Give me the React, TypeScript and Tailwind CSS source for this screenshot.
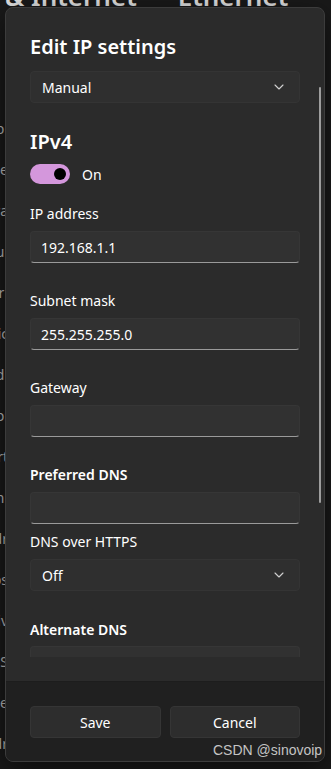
import React from "react";

const font = "font-['Segoe_UI','Noto_Sans',sans-serif]";

function Chevron() {
  return (
    <svg width="10" height="6" viewBox="0 0 10 6" fill="none">
      <path d="M1 1 L5 5 L9 1" stroke="#d0d0d0" strokeWidth="1.1" strokeLinecap="round" strokeLinejoin="round" />
    </svg>
  );
}

function Select({ value }: { value: string }) {
  return (
    <div className="h-[32px] w-full rounded-[4px] bg-[#2f2f2f] border border-[#343434] flex items-center justify-between pl-[11px] pr-[15px]">
      <span className="text-[14px] text-white">{value}</span>
      <Chevron />
    </div>
  );
}

function Input({ value }: { value?: string }) {
  return (
    <div className="h-[32px] w-full rounded-[4px] bg-[#313131] border border-[#363636] border-b-[#9a9a9a] flex items-center pl-[10px]">
      <span className="text-[14px] text-white">{value}</span>
    </div>
  );
}

export default function App() {
  return (
    <div className={`relative w-[331px] h-[769px] overflow-hidden bg-[#1a1a1a] ${font}`}>
      {/* background page */}
      <div className="flex gap-[41px] pl-[5px] -mt-[17px] text-[26px] font-semibold text-[#e6e6e6] leading-[26px] whitespace-nowrap">
        <span>&amp; Internet</span>
        <span>Ethernet</span>
      </div>
      <div className="flex flex-col -ml-[40px] mt-[109px] gap-[20px] text-[14px] text-[#bdbdbd] w-[48px] items-end">
        <span>abl</span>
        <span>ide</span>
        <span>iva</span>
        <span>ul</span>
        <span>ori</span>
        <span>ic</span>
        <span>dl</span>
        <span>tp:</span>
        <span>rt</span>
        <span>ml</span>
        <span>dr</span>
        <span>ps</span>
        <span>iv</span>
        <span>6S</span>
        <span>ie</span>
        <span>dr</span>
        <span>la</span>
        <span>SS</span>
        <span>dr</span>
        <span>SS</span>
        <span>DD</span>
      </div>

      {/* dialog */}
      <div className="absolute left-[5px] top-[7px] w-[320px] h-[755px] rounded-[8px] border border-[#3c3c3c] bg-[#2b2b2b] flex flex-col overflow-hidden text-white shadow-[0_8px_32px_rgba(0,0,0,0.6)]">
        <div className="h-[649px] overflow-hidden px-[24px] pt-[25px] flex flex-col">
          <div className="text-[20px] leading-[28px] font-semibold">Edit IP settings</div>
          <div className="mt-[10px]"><Select value="Manual" /></div>
          <div className="mt-[25px] text-[20px] leading-[28px] font-semibold">IPv4</div>
          <div className="mt-[8px] flex items-center h-[20px]">
            <div className="w-[40px] h-[20px] rounded-full bg-[#d497dc] flex items-center justify-end pr-[4px]">
              <div className="w-[12px] h-[12px] rounded-full bg-black" />
            </div>
            <span className="ml-[12px] text-[14px]">On</span>
          </div>
          <div className="mt-[20px] text-[14px] leading-[20px]">IP address</div>
          <div className="mt-[7px]"><Input value="192.168.1.1" /></div>
          <div className="mt-[28px] text-[14px] leading-[20px]">Subnet mask</div>
          <div className="mt-[7px]"><Input value="255.255.255.0" /></div>
          <div className="mt-[28px] text-[14px] leading-[20px]">Gateway</div>
          <div className="mt-[7px]"><Input /></div>
          <div className="mt-[28px] text-[14px] leading-[20px] font-semibold">Preferred DNS</div>
          <div className="mt-[7px]"><Input /></div>
          <div className="mt-[8px] text-[14px] leading-[20px]">DNS over HTTPS</div>
          <div className="mt-[7px]"><Select value="Off" /></div>
          <div className="mt-[29px] text-[14px] leading-[20px] font-semibold">Alternate DNS</div>
          <div className="mt-[6px]"><Input /></div>
        </div>
        <div className="h-[24px]" />
        <div className="flex-1 bg-[#202020] border-t border-[#1d1d1d] px-[24px] pt-[24px]">
          <div className="grid grid-cols-2 gap-[9px]">
            <div className="h-[32px] rounded-[4px] bg-[#2d2d2d] border border-[#353535] flex items-center justify-center text-[14px]">Save</div>
            <div className="h-[32px] rounded-[4px] bg-[#2d2d2d] border border-[#353535] flex items-center justify-center text-[14px]">Cancel</div>
          </div>
        </div>
        {/* scrollbar */}
        <div className="absolute left-[313px] top-[79px] w-[2px] h-[416px] rounded-full bg-[#9d9d9d]" />
      </div>

      {/* watermark */}
      <div className="absolute left-[213px] top-[741px] text-[14px] leading-[18px] text-[#c4c4c4] font-['Liberation_Sans',Arial,sans-serif]">
        CSDN @sinovoip
      </div>
    </div>
  );
}
